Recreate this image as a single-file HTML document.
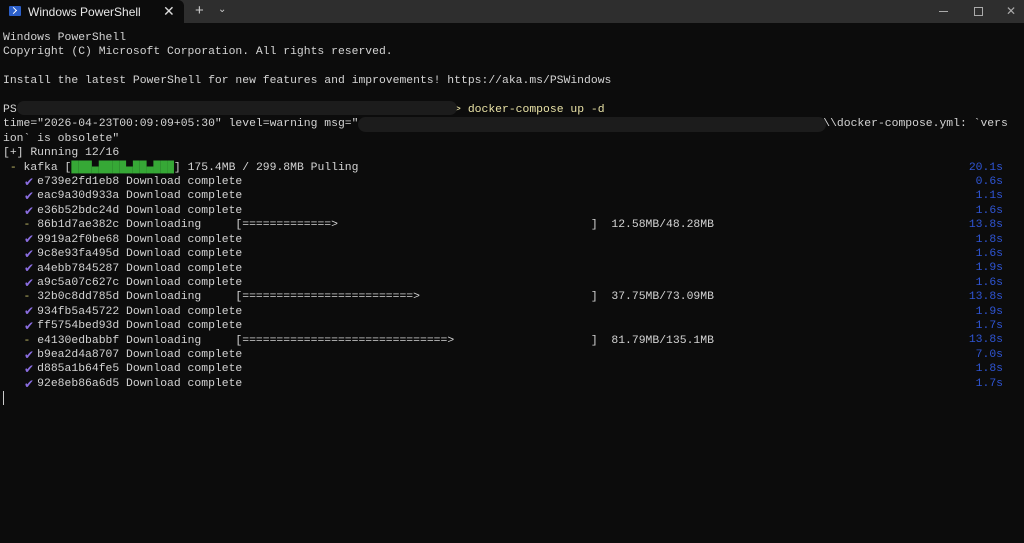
<!DOCTYPE html>
<html><head><meta charset="utf-8"><style>
body{margin:0;width:1024px;height:543px;background:#0c0c0c;overflow:hidden;position:relative;font-family:"Liberation Mono","DejaVu Sans Mono",monospace;}
#bar{position:absolute;left:0;top:0;width:1024px;height:23px;background:#2e2e2e;}
#tab{position:absolute;left:0;top:0;width:184px;height:23px;background:#0c0c0c;border-radius:0 6px 0 0;}
#tab .t{position:absolute;left:28px;top:5px;font:12px "Liberation Sans",sans-serif;color:#e8e8e8;}
#tab .x{position:absolute;left:163px;top:3px;font:14px "Liberation Sans",sans-serif;color:#ddd;}
.ico{position:absolute;left:9px;top:6px;width:12px;height:10px;background:#2b5fc9;border-radius:1px;}
.ico:after{content:"";position:absolute;left:2px;top:2px;width:4px;height:4px;border-right:1.5px solid #fff;border-bottom:1.5px solid #fff;transform:rotate(-45deg);}
pre{position:absolute;left:3px;top:31px;margin:0;font-size:11.4px;line-height:14.4px;color:#d4d4d4;font-family:inherit;white-space:pre;}
.y{color:#c9c16a}.g{color:#36a836;font-size:11.4px;background:repeating-linear-gradient(90deg,transparent 0 2px,#0c0c0c 2px 3px);-webkit-background-clip:text;}.d{color:#e9e2a6}
.blob{position:absolute;background:#1c1c1c;border-radius:8px;}
.tm{position:absolute;right:21px;font-size:11.4px;color:#2f55d4;line-height:14.4px;}
.ck{position:absolute;left:24px;color:#8a6de0;font:bold 12px "DejaVu Sans",sans-serif;line-height:14.4px;}
</style></head><body>
<div id="bar"></div>
<div id="tab"><div class="ico"></div><span class="t">Windows PowerShell</span><span class="x">✕</span></div>
<div style="position:absolute;left:195px;top:2px;color:#ccc;font:15px 'Liberation Sans',sans-serif">+</div>
<div style="position:absolute;left:218px;top:4px;color:#ccc;font:10px 'DejaVu Sans',sans-serif">⌄</div>
<div style="position:absolute;left:939px;top:11px;width:9px;height:1px;background:#aaa"></div>
<div style="position:absolute;left:974px;top:7px;width:7px;height:7px;border:1px solid #aaa"></div>
<div style="position:absolute;left:1006px;top:4px;color:#aaa;font:12px 'Liberation Sans',sans-serif">✕</div>
<pre>Windows PowerShell
Copyright (C) Microsoft Corporation. All rights reserved.

Install the latest PowerShell for new features and improvements! https://aka.ms/PSWindows

PS                                                                <span class="d">&gt; docker-compose up -d</span>
time="2026-04-23T00:09:09+05:30" level=warning msg="                                                                    \\docker-compose.yml: `vers
ion` is obsolete"
[+] Running 12/16
 <span class="y">-</span> kafka [<span class="g">███▄████▄██▄███</span>] 175.4MB / 299.8MB Pulling
     e739e2fd1eb8 Download complete
     eac9a30d933a Download complete
     e36b52bdc24d Download complete
   <span class="y">-</span> 86b1d7ae382c Downloading     [=============&gt;                                     ]  12.58MB/48.28MB
     9919a2f0be68 Download complete
     9c8e93fa495d Download complete
     a4ebb7845287 Download complete
     a9c5a07c627c Download complete
   <span class="y">-</span> 32b0c8dd785d Downloading     [=========================&gt;                         ]  37.75MB/73.09MB
     934fb5a45722 Download complete
     ff5754bed93d Download complete
   <span class="y">-</span> e4130edbabbf Downloading     [==============================&gt;                    ]  81.79MB/135.1MB
     b9ea2d4a8707 Download complete
     d885a1b64fe5 Download complete
     92e8eb86a6d5 Download complete
</pre>
<div class="blob" style="left:17px;top:101px;width:440px;height:14px"></div>
<div class="blob" style="left:358px;top:117px;width:468px;height:15px"></div>
<div style="position:absolute;left:3px;top:391px;width:1px;height:14px;background:#ccc"></div>
<span class="ck" style="top:175px">✔</span><span class="ck" style="top:189px">✔</span><span class="ck" style="top:204px">✔</span>
<span class="ck" style="top:232px">✔</span><span class="ck" style="top:247px">✔</span><span class="ck" style="top:261px">✔</span><span class="ck" style="top:276px">✔</span>
<span class="ck" style="top:304px">✔</span><span class="ck" style="top:319px">✔</span>
<span class="ck" style="top:348px">✔</span><span class="ck" style="top:362px">✔</span><span class="ck" style="top:377px">✔</span>
<span class="tm" style="top:161px">20.1s</span><span class="tm" style="top:175px">0.6s</span><span class="tm" style="top:189px">1.1s</span><span class="tm" style="top:204px">1.6s</span><span class="tm" style="top:218px">13.8s</span><span class="tm" style="top:233px">1.8s</span><span class="tm" style="top:247px">1.6s</span><span class="tm" style="top:261px">1.9s</span><span class="tm" style="top:276px">1.6s</span><span class="tm" style="top:290px">13.8s</span><span class="tm" style="top:305px">1.9s</span><span class="tm" style="top:319px">1.7s</span><span class="tm" style="top:333px">13.8s</span><span class="tm" style="top:348px">7.0s</span><span class="tm" style="top:362px">1.8s</span><span class="tm" style="top:377px">1.7s</span>
</body></html>
